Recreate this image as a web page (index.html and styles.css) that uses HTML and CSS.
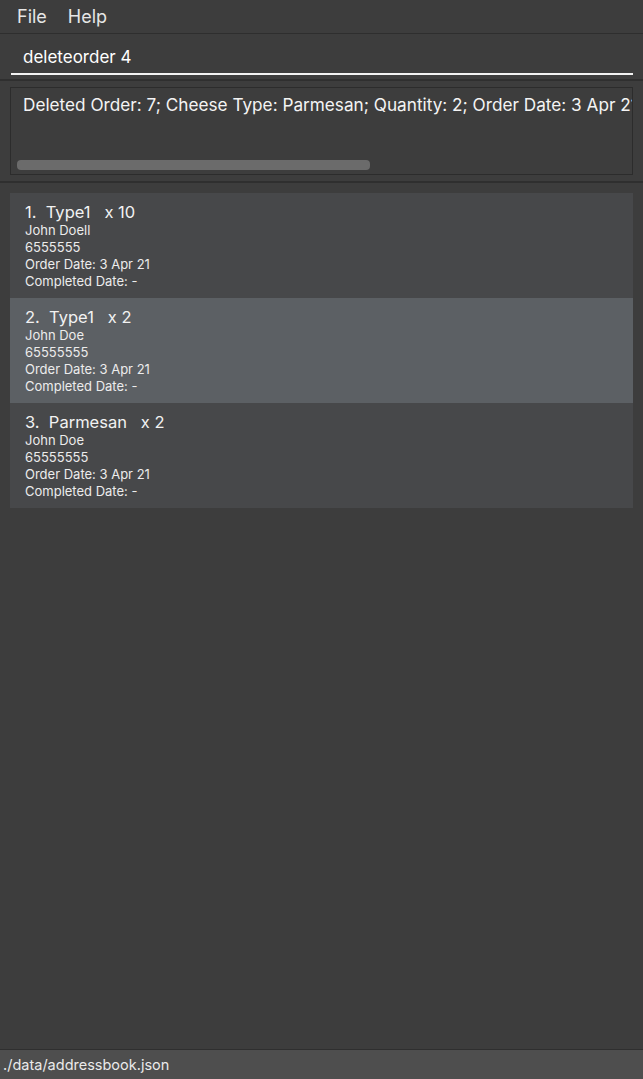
FILE: index.html
```html
<!DOCTYPE html>
<html>
<head>
<meta charset="utf-8">
<link rel="stylesheet" href="styles.css">
</head>
<body>
<div class="app">
  <div class="menubar">
    <span class="menu-item">File</span>
    <span class="menu-item">Help</span>
  </div>
  <div class="command">
    <div class="command-field">deleteorder 4</div>
  </div>
  <div class="result">
    <div class="result-box">
      <div class="result-text">Deleted Order: 7; Cheese Type: Parmesan; Quantity: 2; Order Date: 3 Apr 21; Completed Date: -</div>
      <div class="scrollbar"><div class="thumb"></div></div>
    </div>
  </div>
  <div class="list">
    <div class="card">
      <div class="title">1.&nbsp; Type1 &nbsp; x 10</div>
      <div class="line">John Doell</div>
      <div class="line">6555555</div>
      <div class="line">Order Date: 3 Apr 21</div>
      <div class="line">Completed Date: -</div>
    </div>
    <div class="card selected">
      <div class="title">2.&nbsp; Type1 &nbsp; x 2</div>
      <div class="line">John Doe</div>
      <div class="line">65555555</div>
      <div class="line">Order Date: 3 Apr 21</div>
      <div class="line">Completed Date: -</div>
    </div>
    <div class="card">
      <div class="title">3.&nbsp; Parmesan &nbsp; x 2</div>
      <div class="line">John Doe</div>
      <div class="line">65555555</div>
      <div class="line">Order Date: 3 Apr 21</div>
      <div class="line">Completed Date: -</div>
    </div>
  </div>
  <div class="status">./data/addressbook.json</div>
</div>
</body>
</html>
```
FILE: styles.css
```css
* { box-sizing: border-box; }
html, body { margin: 0; padding: 0; }
body {
  background: #3d3d3d;
  font-family: Inter, Roboto, "Liberation Sans", sans-serif;
  color: #ffffff;
}
.app {
  display: flex;
  flex-direction: column;
  height: 1079px;
  width: 643px;
  overflow: hidden;
}
.menubar {
  height: 34px;
  display: flex;
  align-items: center;
  gap: 21px;
  padding: 0 0 1px 17px;
  border-bottom: 1px solid #2e2e2e;
  font-size: 18px;
  color: #e6e6e6;
}
.command {
  height: 47px;
  padding: 9px 10px 0 11px;
  border-bottom: 2px solid #2f2f2f;
}
.command-field {
  height: 32px;
  padding-left: 12px;
  font-size: 17px;
  line-height: 28px;
  border-bottom: 2px solid #f2f2f2;
}
.result {
  padding: 6px 10px 6px 10px;
  border-bottom: 2px solid #2f2f2f;
}
.result-box {
  height: 88px;
  border: 1px solid #2c2c2c;
  overflow: hidden;
  position: relative;
  padding: 6px 0 0 12px;
}
.result-text {
  white-space: nowrap;
  font-size: 17.2px;
  line-height: 22px;
  color: #f4f4f4;
}
.scrollbar {
  position: absolute;
  left: 6px;
  right: 6px;
  bottom: 4px;
  height: 10px;
}
.thumb {
  width: 353px;
  height: 10px;
  border-radius: 4px;
  background: #6b6b6b;
}
.list {
  flex: 1;
  padding: 10px 10px 0 10px;
}
.card {
  height: 105px;
  background: #47484a;
  padding: 9px 15px 0 15px;
}
.card.selected {
  background: #5c6064;
}
.title {
  font-size: 16.5px;
  line-height: 20px;
  color: #f2f2f2;
}
.line {
  font-size: 13px;
  line-height: 17px;
  color: #ececec;
}
.status {
  height: 30px;
  border-top: 1px solid #2f2f2f;
  background: #4e4e4e;
  font-size: 14.5px;
  line-height: 29px;
  padding-left: 3px;
  color: #eaeaea;
}
```
